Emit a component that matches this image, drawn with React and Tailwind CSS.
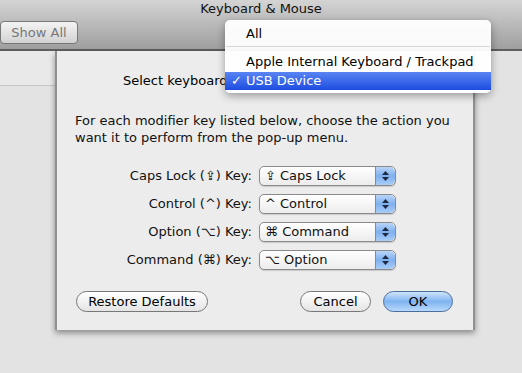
import React from 'react'

const rows = [
  { label: 'Caps Lock (⇪) Key:', value: '⇪ Caps Lock' },
  { label: 'Control (^) Key:', value: '^ Control' },
  { label: 'Option (⌥) Key:', value: '⌘ Command' },
  { label: 'Command (⌘) Key:', value: '⌥ Option' },
]

function Stepper() {
  return (
    <div className="w-[20px] h-full flex flex-col items-center justify-center gap-[2px] rounded-r-[5px] bg-gradient-to-b from-[#b9d4f7] via-[#7fb0ee] to-[#a9cdf8] border-l border-[#6d8fc0]">
      <svg width="7" height="4" viewBox="0 0 7 4"><path d="M0 4 L3.5 0 L7 4 Z" fill="#1c2a44" /></svg>
      <svg width="7" height="4" viewBox="0 0 7 4"><path d="M0 0 L3.5 4 L7 0 Z" fill="#1c2a44" /></svg>
    </div>
  )
}

function PopUp({ value }) {
  return (
    <div className="w-[137px] h-[20px] flex items-stretch rounded-[5px] border border-[#8a8a8a] bg-gradient-to-b from-[#ffffff] to-[#ececec] shadow-[0_1px_1px_rgba(0,0,0,0.15)]">
      <div className="flex-1 flex items-center pl-[5px] text-[#111]">{value}</div>
      <Stepper />
    </div>
  )
}

export default function App() {
  return (
    <div
      className="relative w-[522px] h-[373px] overflow-hidden bg-[#e3e3e3] text-[13px] text-black"
      style={{ fontFamily: '"DejaVu Sans", sans-serif' }}
    >
      {/* toolbar */}
      <div className="h-[51px] bg-gradient-to-b from-[#d4d4d4] to-[#9f9f9f] border-b-2 border-[#5e5e5e]">
        <div className="text-center pt-[1px] leading-[16px] text-[#111]">Keyboard &amp; Mouse</div>
        <div className="mt-[4px] w-[78px] h-[23px] flex items-center justify-center rounded-[4px] border border-[#777] bg-gradient-to-b from-[#f4f4f4] to-[#d2d2d2] text-[#777]">
          Show All
        </div>
      </div>

      {/* window body */}
      <div className="flex h-[320px]">
        <div className="w-[55px]">
          <div className="h-[35px] border-b border-[#c8c8c8] bg-[#e9e9e9]" />
        </div>

        <div className="w-[420px] h-[279px] bg-[#ececec] border-x-2 border-[#8f8f8f] shadow-[0_3px_6px_rgba(0,0,0,0.4)] flex flex-col">
          <div className="pt-[21px] pl-[66px] leading-[18px]">Select keyboard</div>

          <div className="mt-[22px] pl-[18px] leading-[17px] text-[#111]">
            <div>For each modifier key listed below, choose the action you</div>
            <div>want it to perform from the pop-up menu.</div>
          </div>

          <div className="mt-[20px] flex flex-col gap-[8px]">
            {rows.map((r) => (
              <div key={r.label} className="flex items-center">
                <div className="w-[195px] text-right text-[#111]">{r.label}</div>
                <div className="ml-[7px]">
                  <PopUp value={r.value} />
                </div>
              </div>
            ))}
          </div>

          <div className="mt-[21px] flex items-center pl-[19px] pr-[20px]">
            <div className="w-[132px] h-[21px] flex items-center justify-center rounded-full border border-[#777] bg-gradient-to-b from-[#ffffff] to-[#e4e4e4]">
              Restore Defaults
            </div>
            <div className="ml-auto w-[71px] h-[21px] flex items-center justify-center rounded-full border border-[#777] bg-gradient-to-b from-[#ffffff] to-[#e4e4e4]">
              Cancel
            </div>
            <div className="ml-[12px] w-[70px] h-[21px] flex items-center justify-center rounded-full border border-[#4c6f9e] bg-gradient-to-b from-[#cfe4fb] via-[#7fb3ef] to-[#b8d9fb]">
              OK
            </div>
          </div>
        </div>

        <div className="flex-1" />
      </div>

      {/* keyboard pop-up menu */}
      <div className="absolute left-[225px] top-[20px] w-[266px] h-[73px] rounded-[5px] bg-white/95 shadow-[0_3px_8px_rgba(0,0,0,0.35)] flex flex-col">
        <div className="h-[26px] flex items-center pl-[21px] pt-[1px]">All</div>
        <div className="h-px bg-[#d8d8d8] mx-[1px]" />
        <div className="h-[25px] flex items-center pl-[21px] pt-[5px]">Apple Internal Keyboard / Trackpad</div>
        <div className="h-[18px] flex items-center bg-gradient-to-b from-[#5a84f2] to-[#1d4be0] text-white">
          <span className="w-[21px] pl-[6px]">✓</span>
          <span>USB Device</span>
        </div>
      </div>
    </div>
  )
}
